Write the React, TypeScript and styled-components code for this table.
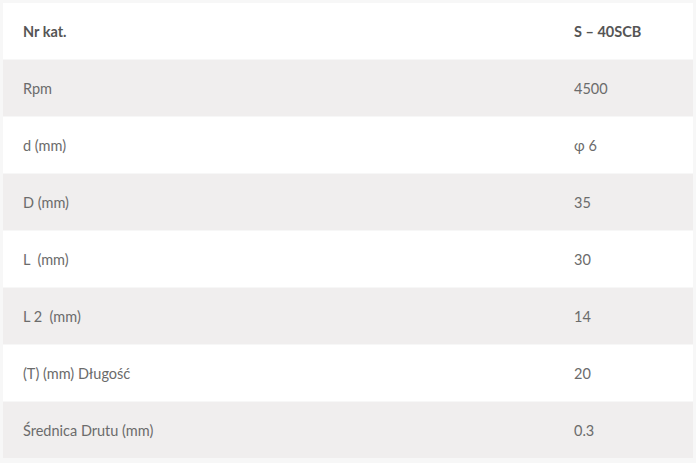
import styled, { createGlobalStyle } from "styled-components";

const GlobalStyle = createGlobalStyle`
  body {
    margin: 0;
    background: #ffffff;
    font-family: Lato, "Open Sans", sans-serif;
  }
`;

const StyledFrame = styled.div`
  background: #f7f7f7;
  box-sizing: border-box;
  padding: 3px;
  width: 696px;
  height: 463px;
`;

const StyledTable = styled.table`
  border-collapse: separate;
  border-spacing: 0 1px;
  margin-top: -1px;
  table-layout: fixed;
  width: 100%;
`;

const StyledRow = styled.tr<{ $shaded: boolean }>`
  background: ${(p) => (p.$shaded ? "#f0eeee" : "#ffffff")};
  height: 56px;
`;

const StyledCell = styled.td<{ $head: boolean }>`
  color: ${(p) => (p.$head ? "#555555" : "#6b6b6b")};
  font-size: 14.5px;
  font-weight: ${(p) => (p.$head ? 700 : 400)};
  padding: 1px 0 0 20px;
  vertical-align: middle;
  white-space: pre;
`;

const StyledLabel = styled(StyledCell)`
  width: 531px;
`;

const rows: [string, string][] = [
  ["Nr kat.", "S – 40SCB"],
  ["Rpm", "4500"],
  ["d (mm)", "φ 6"],
  ["D (mm)", "35"],
  ["L  (mm)", "30"],
  ["L 2  (mm)", "14"],
  ["(T) (mm) Długość", "20"],
  ["Średnica Drutu (mm)", "0.3"],
];

export default function App() {
  return (
    <>
      <GlobalStyle />
      <StyledFrame>
        <StyledTable>
          <tbody>
            {rows.map(([label, value], i) => (
              <StyledRow key={label} $shaded={i % 2 === 1}>
                <StyledLabel $head={i === 0}>{label}</StyledLabel>
                <StyledCell $head={i === 0}>{value}</StyledCell>
              </StyledRow>
            ))}
          </tbody>
        </StyledTable>
      </StyledFrame>
    </>
  );
}
